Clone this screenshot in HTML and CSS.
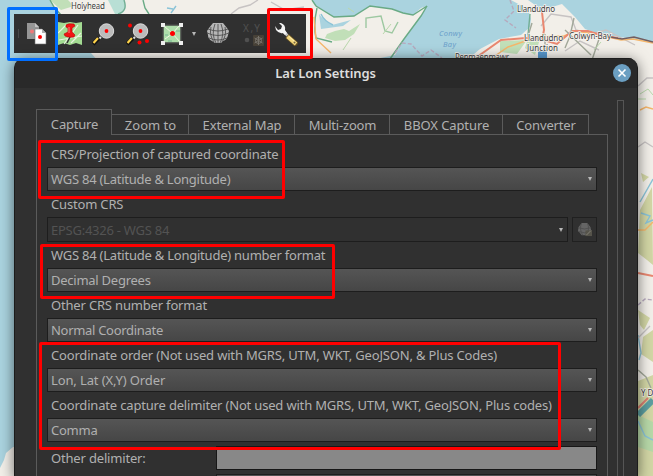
FILE: index.html
```html
<!DOCTYPE html>
<html lang="en">
<head>
<meta charset="utf-8">
<title>Lat Lon Settings</title>
<link rel="stylesheet" href="styles.css">
</head>
<body>
<div class="desktop">
<svg class="map" viewBox="0 0 653 476" aria-hidden="true">
  <rect width="653" height="476" fill="#aad3df"/>
  <path d="M50 0L54 7 61 16 75 42 91 53 106 70H322L395 55 404 39 421 16 427 6 421 8 413 15 403 13 392 9 370 6 354 16 334 17 316 6 312 0Z" fill="#f2efe9"/>
  <path d="M511 0L522 6 528 9 531 19 530 27 521 35 499 39 480 49 462 64 653 64V42L600 34 585 29 575 17 562 4 542 10 528 0Z" fill="#f2efe9"/>
  <path d="M580 42H653V476H580Z" fill="#f2efe9"/>
  <path d="M0 476V468L4 460 6 453 13 447 18 447V476Z" fill="#f2efe9"/>
  <path d="M124 0Q128 10 121 14H115L108 0Z" fill="#b8dfd5"/>
  <path d="M319 14Q324 21 332 25L351 20 343 26 321 29Z" fill="#aad3df"/>
  <path d="M327 34L335 31 344 29 349 31 360 24 354 34 345 40 335 41 325 38ZM500 41L527 40 517 54 500 52ZM529 35L540 39 535 55 525 48ZM50 0L68 0 74 6 61 10Z" fill="#c1dfb8"/>
  <path d="M652 187L640 210 638 253 647 260 653 265ZM641 173L649 177 643 182ZM638 310L650 318 644 330 640 325ZM643 337L653 330V362L641 354ZM638 381L653 375V476H638Z" fill="#d2d6a5"/>
  <path d="M638 415L653 422V452L638 447Z" fill="#b7d8a8"/>
  <g fill="none" stroke-width="1.4">
    <path d="M50 0L54 7 61 15M143 0L145 8 149 14M312 0L316 6 334 17 354 16 370 6 392 9 403 13 413 15 427 6 421 16 404 39 390 59M317 8Q313 25 316 38L332 42" stroke="#69aa85"/>
    <path d="M366 28V18L381 16 385 31 392 33 398 22" stroke="#9dc8a1"/>
    <path d="M124 0Q128 11 118 14M530 14L528 35" stroke="#72ae94"/>
    <path d="M176 6L171 13M167 8L173 9M321 14Q324 21 333 25M633 64V104M653 179L640 202M641 213L650 216 646 223 653 220M638 335L641 353 639 360M638 421L645 436 653 440" stroke="#8ac3d7"/>
    <path d="M258 0L250 5 239 8 231 14M271 2L285 10 304 7M541 26L551 14 571 17 576 30 591 34 606 30 635 45M565 51L580 41 599 50M638 86L647 78 653 78M638 147L645 142 653 147M638 338L650 326" stroke="#c7c3c3"/>
    <path d="M314 17L316 39 331 53M492 58L508 47 537 37 564 36 576 31 600 35 621 40 633 39 653 43M640 110L646 107 653 109M638 230L645 230 653 222" stroke="#f5b66b"/>
    <path d="M477 57L501 40 526 38 540 39 557 44 572 31 588 31 604 36 618 38M542 12L544 30 542 40M638 273L653 276" stroke="#e98770" stroke-width="2"/>
    <path d="M545 34V57M532 23L528 36 537 40M565 30L591 55M574 18L570 36 565 48M600 36L592 60M638 370L646 377 651 388" stroke="#a2a899"/>
    <path d="M599 35L622 39 634 37 653 42" stroke="#725e60"/>
    <path d="M638 305L645 299 653 300M395 53L402 43 411 44 422 56 431 50 442 58M510 0L514 11 505 20 516 28" stroke="#b6a9bd" stroke-dasharray="4 2"/>
    <path d="M638 415L653 400" stroke="#5d9ea0" stroke-width="6"/>
    <path d="M638 408L648 398" stroke="#db7e71" stroke-width="2"/>
  </g>
  <path d="M538 51H547V59H538Z" fill="#5798ce"/>
  <g fill="none" stroke="#b9d8ac"><path d="M348 8L354 12M391 24L383 34M351 38L343 50M601 42L594 50M640 94L648 89 653 95M638 99H646"/></g>
  <g class="place">
    <text x="71" y="9" textLength="34">Holyhead</text><text x="517" y="12" textLength="38">Llandudno</text>
    <text x="524" y="41" textLength="39">Llandudno</text><text x="527" y="51" textLength="31">Junction</text>
    <text x="569" y="39" textLength="42">Colwyn-Bay</text><text x="455" y="60" textLength="54">Penmaenmawr</text>
    <text x="641" y="396">Y D</text>
    <g class="sea"><text x="439" y="36" textLength="23">Conwy</text><text x="443" y="46.500" textLength="13">Bay</text></g>
  </g>
</svg>

<div class="toolbar">
  <i class="handle"></i>
  <svg class="icon" viewBox="0 0 24 24"><path d="M3 1h8l4 4v12H3z" fill="#969696"/><path d="M11 1v4h4" fill="#c4c4c4"/><circle cx="8" cy="9.500" r="2" fill="#f07878"/><path d="M11 7h7l4 4v11H11z" fill="#fff" stroke="#777" stroke-width=".6"/><path d="M18 7v4h4z" fill="#b0b0b0"/><circle cx="16" cy="15" r="2" fill="#f00"/></svg>
  <svg class="icon" viewBox="0 0 24 24"><path d="M0 0l6 1 6-1 6 1 6-1v23l-6-2-6 2-6-2-6 2z" fill="#a3db92"/><path d="M0 11l8-8M6 22l14-19M13 21l10-10M1 18l23-4" fill="none" stroke="#e8f4df" stroke-width="1.200"/><path d="M12 15l-3 6" stroke="#333" stroke-width="1.500"/><path d="M8 3q2-2 8-1l1 2-3 2v4l3 3-1 2q-5 1-9-1l-1-2 4-2V6L8 5z" fill="#f21414" stroke="#b80000" stroke-width=".6"/><path d="M11 5v6" stroke="#ff8585"/></svg>
  <svg class="icon" viewBox="0 0 24 24"><path d="M9 15l-2 2" stroke="#ddd" stroke-width="2"/><path d="M7 16L1 22" stroke="#111" stroke-width="4"/><path d="M6 16L1.500 21" stroke="#ffd44c" stroke-width="2.200"/><circle cx="14.500" cy="9" r="7.200" fill="#bcbcbc" stroke="#ddd"/><circle cx="14.500" cy="9" r="1.900" fill="#f00"/></svg>
  <svg class="icon" viewBox="0 0 24 24"><path d="M9 15l-2 2" stroke="#ddd" stroke-width="2"/><path d="M7 16L1 22" stroke="#111" stroke-width="4"/><path d="M6 16L1.500 21" stroke="#ffd44c" stroke-width="2.200"/><circle cx="14.500" cy="9" r="7.200" fill="#bcbcbc" stroke="#ddd"/><g fill="#f00"><circle cx="14.500" cy="9" r="1.900"/><circle cx="4" cy="3.500" r="2"/><circle cx="13.500" cy="20.500" r="2"/><circle cx="21" cy="19" r="2"/></g></svg>
  <svg class="icon" viewBox="0 0 24 24"><path d="M3 3h18v18H3z" fill="#aeddaa" stroke="#444" stroke-width="1.500"/><path d="M4 4l8 7 8 9M5 17l7-5 7-8" fill="none" stroke="#f0f8df" stroke-width="1"/><path d="M5 13h3M16 9h4M8 19h4" stroke="#75b693"/><path d="M1 1h4v4H1zM19 1h4v4h-4zM1 19h4v4H1zM19 19h4v4h-4z" fill="#eee"/><circle cx="12.500" cy="11.500" r="2.500" fill="#f00"/></svg>
  <i class="arrow menu-arrow"></i>
  <svg class="icon globe" viewBox="0 0 24 24"><path d="M3 6L7 1h10l4 5 2 3-1 4q-1 5-5 6l-2 2H9l-3-2q-4-2-4-6l-1-4z" fill="#b6b6b6"/><path d="M2 7Q12 11 22 7M1 11Q12 16 23 11M3 16Q12 20 21 16M9 2Q5 12 10 21M15 2Q19 12 14 21M12 2v19M5 5q-2 8 3 15M19 5q2 8-3 15" fill="none" stroke="#505050" stroke-width=".9"/></svg>
  <svg class="icon xy" viewBox="0 0 24 24"><text x="1" y="10" textLength="17">X,Y</text><circle cx="5" cy="18" r="2.300"/><rect x="11" y="13" width="11" height="11" rx="1" fill="#474137"/><circle cx="16.500" cy="18.500" r="3" fill="none" stroke="#77736c"/><path d="M16.500 14v9M12.500 16l8 5M20.500 16l-8 5" stroke="#77736c"/></svg>
  <svg class="icon wrench" viewBox="0 0 24 24"><path d="M9 9l6 6" stroke="#c5c5c5" stroke-width="2.800"/><path d="M13 14l10 9" stroke="#5f4c24" stroke-width="5.500"/><path d="M13.500 14.500l8.500 7.500" stroke="#f3d67b" stroke-width="3.800"/><path d="M15 14.500l6 5.500" stroke="#fff0b6"/><path d="M1 4l1 4q3 4 7 3l2 2 2-2-2-3q1-5-4-7L5 1l3 3-1 3-3 1z" fill="#f3f3f3"/><circle cx="20.500" cy="20.500" r="1" fill="#746541"/></svg>
</div>

<main class="dialog">
  <header class="titlebar"><h1>Lat Lon Settings</h1><button class="close" aria-label="Close"><svg viewBox="0 0 18 18"><path d="M5.500 5.500l7 7m0-7l-7 7"/></svg></button></header>
  <div class="content">
    <section class="settings">
      <nav class="tabs"><span class="tab active"><b>Capture</b></span><span class="tab zoom"><b>Zoom to</b></span><span class="tab external"><b>External Map</b></span><span class="tab multi"><b>Multi-zoom</b></span><span class="tab bbox"><b>BBOX Capture</b></span><span class="tab converter"><b>Converter</b></span></nav>
      <div class="pane">
        <label class="first">CRS/Projection of captured coordinate</label>
        <div class="combo"><span>WGS 84 (Latitude &amp; Longitude)</span><i class="arrow"></i></div>
        <label>Custom CRS</label>
        <div class="custom"><div class="combo disabled"><span>EPSG:4326 - WGS 84</span><i class="arrow"></i></div><div class="pick"><svg viewBox="0 0 16 16"><path d="M2 5l3-4h6l3 4 1 3-3 6H5L1 9z" fill="#656565"/><path d="M1 6q7 3 14 0M1 10q7 3 14 0M5 1q-3 6 1 13M11 1q3 6-1 13" fill="none" stroke="#505050"/><rect x="9" y="9" width="7" height="6" fill="#55534a"/><path d="M10 14l5-5" stroke="#88857b"/></svg></div></div>
        <label class="format">WGS 84 (Latitude &amp; Longitude) number format</label>
        <div class="combo"><span>Decimal Degrees</span><i class="arrow"></i></div>
        <label>Other CRS number format</label>
        <div class="combo"><span class="normal">Normal Coordinate</span><i class="arrow"></i></div>
        <label>Coordinate order (Not used with MGRS, UTM, WKT, GeoJSON, &amp; Plus Codes)</label>
        <div class="combo"><span class="lonlat">Lon, Lat (X,Y) Order</span><i class="arrow"></i></div>
        <label>Coordinate capture delimiter (Not used with MGRS, UTM, WKT, GeoJSON, Plus codes)</label>
        <div class="combo"><span>Comma</span><i class="arrow"></i></div>
        <div class="other"><label>Other delimiter:</label><div class="input"></div></div>
        <div class="next"></div>
      </div>
    </section>
    <div class="scrollbar"></div>
  </div>
</main>
<div class="mark blue"></div><div class="mark tool"></div><div class="mark crs"></div><div class="mark number"></div><div class="mark order"></div>
</div>
</body>
</html>
```
FILE: styles.css
```css
* { box-sizing: border-box; }
body { margin: 0; font: 13px/20px "Noto Sans", "Open Sans", sans-serif; color: #b0b0b0; }
.desktop { position: relative; width: 653px; height: 476px; overflow: hidden; padding-top: 14px; }
.map { position: absolute; left: 0; top: 0; width: 653px; height: 476px; }
.place { font: 8px "Noto Sans", sans-serif; fill: #3c3c3c; stroke: #f5f2ed; stroke-width: 1.5px; paint-order: stroke; }
.sea { font-size: 7.5px; font-style: italic; fill: #6b9fca; stroke: none; }
.toolbar { position: relative; width: 292px; height: 39px; margin-left: 14px; padding-left: 4px; display: flex; align-items: center; gap: 10px; background: #303030; }
.handle { width: 1px; height: 9px; background: #484848; margin-right: -5px; }
.icon { width: 24px; height: 24px; flex: none; }
.arrow { width: 0; height: 0; border: 2px solid transparent; border-top: 4px solid #b8b8b8; border-bottom: 0; }
.menu-arrow { margin-left: -2px; }
.globe { margin-left: 0; }
.xy { margin-left: 2px; fill: #505050; font: 10px "Noto Sans", sans-serif; }
.wrench { margin-left: -2px; }
.dialog { position: relative; width: 624px; height: 420px; margin: 5px 0 0 14px; background: #303030; border-radius: 10px 10px 0 0; border-left: 1px solid #1b1b1b; border-right: 1px solid #1b1b1b; box-shadow: 0 2px 14px rgba(0,0,0,.55); overflow: hidden; }
.titlebar { height: 30px; background: #292929; border-top: 1px solid #1d1d1d; display: grid; grid-template-columns: 1fr 30px; align-items: center; }
.titlebar h1 { margin: 0; text-align: center; padding: 0 0 2px 29px; color: #dedede; font: 600 13px/20px "Noto Sans", sans-serif; letter-spacing: -.08px; }
.close { width: 18px; height: 18px; margin: -1px 0 0 6px; padding: 0; border: 0; border-radius: 50%; background: #6b9fc2; }
.close svg { display: block; fill: none; stroke: #fff; stroke-width: 1.6px; }
.content { display: flex; padding: 12px 13px 0 21px; height: 390px; }
.settings { width: 572px; margin-right: 9px; padding-top: 9px; }
.tabs { display: flex; align-items: end; height: 26px; position: relative; }
.tab { height: 21px; border: 1px solid #5b5b5b; border-left: 0; display: flex; justify-content: center; align-items: center; padding: 1px 0 0 1px; white-space: nowrap; }
.tab b { font-weight: 400; }
.active { width: 76px; height: 26px; border-left: 1px solid #5b5b5b; border-bottom: 0; padding-top: 3px; letter-spacing: -.2px; }
.zoom { width: 77px; } .external { width: 106px; letter-spacing: -.15px; } .multi { width: 95px; letter-spacing: -.2px; } .bbox { width: 113px; letter-spacing: -.1px; } .converter { width: 86px; letter-spacing: -.15px; }
.pane { border: 1px solid #5b5b5b; border-top: 0; height: 350px; padding: 0 10px; background: linear-gradient(#5b5b5b,#5b5b5b) 75px 0 / 496px 1px no-repeat; margin-top: -1px; }
label { display: block; height: 26px; line-height: 26px; padding-left: 4px; white-space: nowrap; letter-spacing: -.175px; }
.format { letter-spacing: -.23px; }
.first { height: 33px; line-height: 40px; letter-spacing: -.15px; }
.combo { height: 24px; border: 1px solid #1d1d1d; background: linear-gradient(#555,#464646); display: flex; align-items: center; justify-content: space-between; padding: 0 4px 0 3px; letter-spacing: -.25px; }
.normal { letter-spacing: -.3px; }
.lonlat { letter-spacing: -.12px; }
.custom { display: flex; gap: 4px; }
.custom .combo { height: 25px; flex: 1; }
.disabled { background: #303030; color: #535353; }
.pick { width: 25px; height: 25px; border: 1px solid #202020; padding: 4px; }
.pick svg { display: block; width: 15px; height: 15px; }
.other { display: flex; height: 28px; margin-top: 4px; }
.other label { width: 169px; line-height: 24px; }
.input { width: 381px; height: 24px; border: 1px solid #171717; background: #888; }
.next { height: 24px; margin-left: 169px; border: 1px solid #1d1d1d; background: #505050; }
.scrollbar { width: 8px; height: 390px; border: 1px solid #555; border-bottom: 0; }
.mark { position: absolute; border: 3px solid #f00; border-radius: 2px; pointer-events: none; }
.blue { left: 7px; top: 7px; width: 51px; height: 54px; border-color: #006eff; }
.tool { left: 267px; top: 8px; width: 46px; height: 51px; }
.crs { left: 38px; top: 140px; width: 247px; height: 59px; }
.number { left: 40px; top: 244px; width: 295px; height: 55px; }
.order { left: 39px; top: 342px; width: 522px; height: 108px; }
```
